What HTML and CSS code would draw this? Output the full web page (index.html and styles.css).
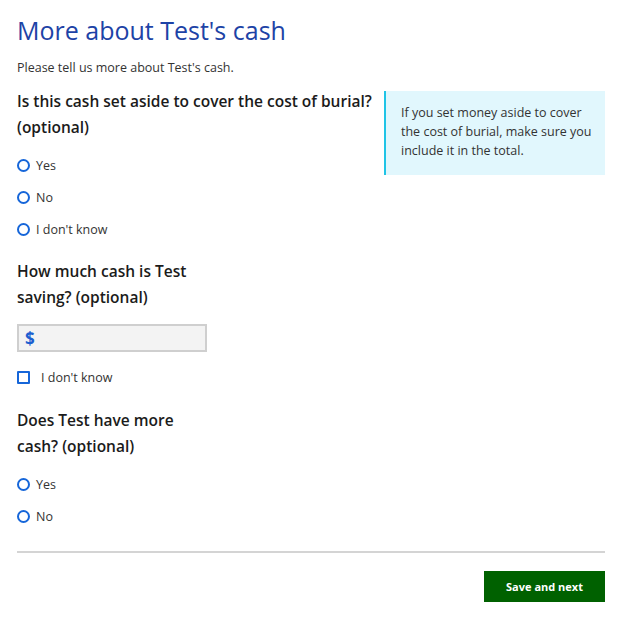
FILE: index.html
```html
<!DOCTYPE html>
<html lang="en">
<head>
<meta charset="utf-8">
<title>More about Test's cash</title>
<link rel="stylesheet" href="styles.css">
</head>
<body>
<main class="page">
  <h1 class="title">More about Test's cash</h1>
  <p class="intro">Please tell us more about Test's cash.</p>

  <div class="split">
    <fieldset class="field">
      <legend class="question">Is this cash set aside to cover the cost of burial? (optional)</legend>
      <label class="radio"><span class="ring"></span>Yes</label>
      <label class="radio"><span class="ring"></span>No</label>
      <label class="radio"><span class="ring"></span>I don't know</label>
    </fieldset>
    <aside class="hint">If you set money aside to cover the cost of burial, make sure you include it in the total.</aside>
  </div>

  <fieldset class="field">
    <legend class="question narrow">How much cash is Test saving? (optional)</legend>
    <div class="money"><span class="dollar">$</span></div>
    <label class="check"><span class="box"></span>I don't know</label>
  </fieldset>

  <fieldset class="field">
    <legend class="question narrow">Does Test have more cash? (optional)</legend>
    <label class="radio"><span class="ring"></span>Yes</label>
    <label class="radio"><span class="ring"></span>No</label>
  </fieldset>

  <hr class="rule">
  <div class="actions">
    <button class="primary" type="button">Save and next</button>
  </div>
</main>
</body>
</html>
```
FILE: styles.css
```css
* { box-sizing: border-box; }
html, body { margin: 0; padding: 0; background: #fff; }
body {
  font-family: "Open Sans", "Noto Sans", sans-serif;
  color: #1b1b1b;
}
.page {
  width: 588px;
  margin-left: 17px;
  padding-top: 12px;
}
.title {
  margin: 0;
  font-size: 25px;
  font-weight: 400;
  line-height: 36px;
  color: #1d43a6;
}
.intro {
  margin: 11px 0 0;
  font-size: 12.5px;
  line-height: 18px;
  color: #333;
}
.split {
  display: grid;
  grid-template-columns: 1fr 221px;
  column-gap: 8px;
  align-items: start;
  margin-top: 11px;
}
.split .hint { margin-top: 3px; }
.field {
  border: 0;
  margin: 0;
  padding: 0;
  min-width: 0;
}
.question {
  padding: 0;
  font-size: 15.5px;
  font-weight: 600;
  line-height: 26px;
  color: #1b1b1b;
  margin-bottom: 9px;
}
.question.narrow { max-width: 192px; }
.split + .field { margin-top: 13px; }
.field + .field { margin-top: 14px; }
.radio, .check {
  display: flex;
  align-items: center;
  height: 32px;
  font-size: 12.5px;
  color: #333;
}
.ring {
  width: 13px;
  height: 13px;
  border: 2px solid #1666d9;
  border-radius: 50%;
  margin-right: 6px;
  flex: none;
}
.box {
  width: 13px;
  height: 13px;
  border: 2px solid #1666d9;
  border-radius: 1px;
  margin-right: 11px;
  flex: none;
}
.hint {
  background: #e1f7fd;
  border-left: 2px solid #1fc4e6;
  padding: 12px 12px 15px 15px;
  font-size: 12.5px;
  line-height: 19px;
  color: #333;
}
.money {
  width: 190px;
  height: 28px;
  margin-top: 5px;
  background: #f3f3f3;
  border: 2px solid #cfcfcf;
  display: flex;
  align-items: center;
  padding-left: 6px;
}
.dollar {
  color: #1d5fcf;
  font-weight: 700;
  font-size: 17px;
}
.check { margin-top: 9px; height: 32px; }
.rule {
  border: 0;
  border-top: 2px solid #d4d4d4;
  margin: 19px 0 0;
}
.actions {
  display: flex;
  justify-content: flex-end;
  margin-top: 18px;
}
.primary {
  width: 121px;
  height: 31px;
  border: 0;
  background: #006100;
  color: #fff;
  font-family: "Open Sans", sans-serif;
  font-weight: 700;
  font-size: 11px;
  cursor: pointer;
}
```
